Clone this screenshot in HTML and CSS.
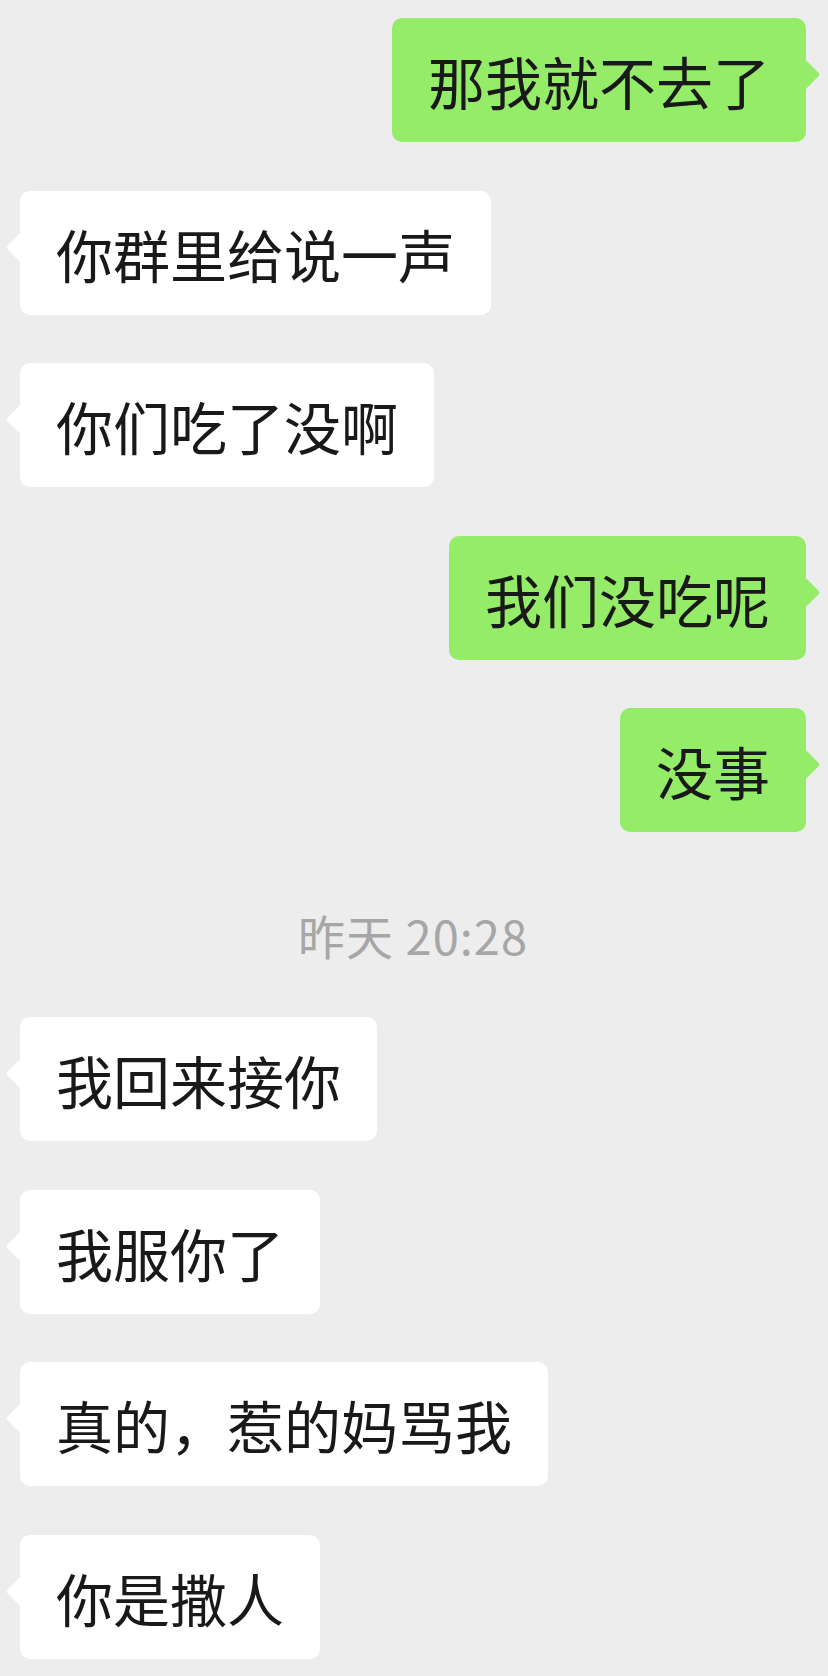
FILE: index.html
```html
<!DOCTYPE html>
<html lang="zh-CN">
<head>
    <meta charset="UTF-8">
    <meta name="viewport" content="width=device-width, initial-scale=1.0">
    <title>聊天记录</title>
    <link rel="stylesheet" href="styles.css">
</head>
<body>
    <div class="chat">
        <div class="row mine"><div class="bubble">那我就不去了</div></div>
        <div class="row theirs"><div class="bubble">你群里给说一声</div></div>
        <div class="row theirs"><div class="bubble">你们吃了没啊</div></div>
        <div class="row mine"><div class="bubble">我们没吃呢</div></div>
        <div class="row mine"><div class="bubble">没事</div></div>

        <div class="time">昨天 20:28</div>

        <div class="row theirs"><div class="bubble">我回来接你</div></div>
        <div class="row theirs"><div class="bubble">我服你了</div></div>
        <div class="row theirs"><div class="bubble">真的，惹的妈骂我</div></div>
        <div class="row theirs"><div class="bubble">你是撒人</div></div>
    </div>
</body>
</html>
```

FILE: styles.css
```css
* {
    box-sizing: border-box;
    margin: 0;
    padding: 0;
}
html, body {
    height: 100%;
}
body {
    background: #ededed;
    font-family: "Noto Sans CJK SC", "Noto Sans", sans-serif;
    color: #191919;
    overflow: hidden;
}
.chat {
    display: flex;
    flex-direction: column;
    gap: 48.5px;
    padding: 18px 22px 0 20px;
}
.row {
    display: flex;
}
.row.mine {
    justify-content: flex-end;
}
.row.theirs {
    justify-content: flex-start;
}
.bubble {
    position: relative;
    height: 124px;
    padding: 33px 36px;
    font-size: 57px;
    line-height: 58px;
    white-space: nowrap;
    border-radius: 10px;
    background: #fff;
}
.mine .bubble {
    background: #95ec69;
}
/* little tail pointing to the speaker */
.bubble::before {
    content: "";
    position: absolute;
    top: 46px;
    width: 21px;
    height: 21px;
    border-radius: 3px;
    background: inherit;
    transform: rotate(45deg);
}
.theirs .bubble::before {
    left: -10px;
}
.mine .bubble::before {
    right: -10px;
}
.time {
    margin: 30px 0 11px;
    text-align: center;
    font-size: 47px;
    line-height: 47px;
    letter-spacing: 1px;
    color: #a6a6a6;
}
```
